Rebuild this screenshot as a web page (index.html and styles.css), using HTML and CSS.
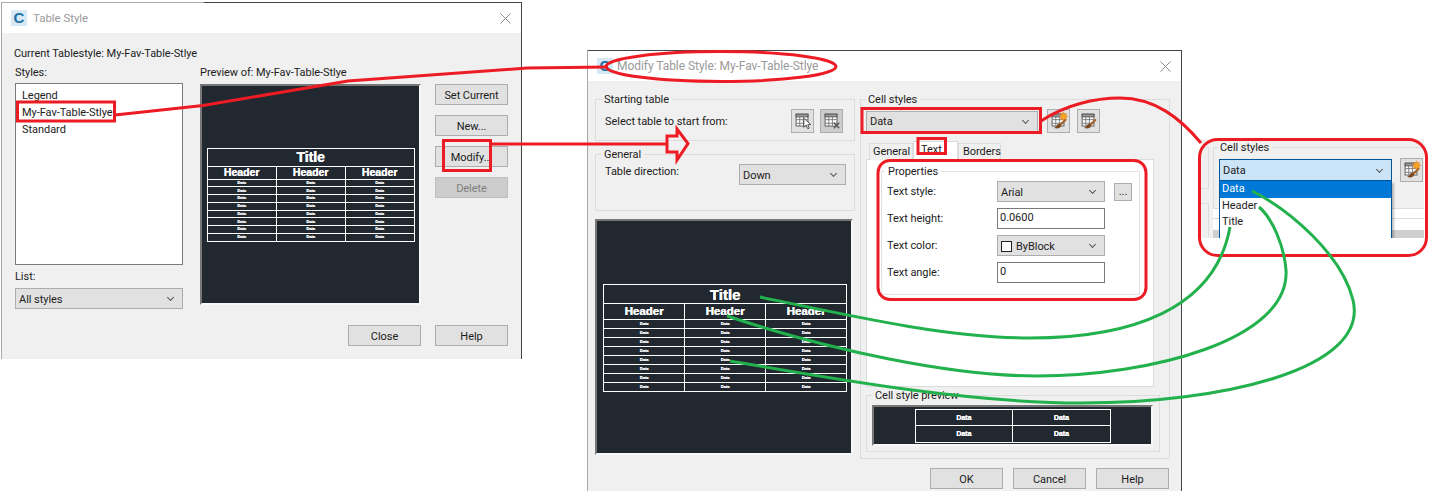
FILE: index.html
```html
<!DOCTYPE html>
<html lang="en">
<head>
    <meta charset="UTF-8">
    <title>Table Style dialogs</title>
    <link rel="stylesheet" href="styles.css">
</head>
<body>
    <!-- shared toolbar icons -->
    <svg class="icon-defs" aria-hidden="true">
        <symbol id="grid" viewBox="0 0 23 24">
            <rect x="4.500" y="4.500" width="13" height="13" fill="#fff" stroke="#555"/>
            <rect x="4.500" y="4.500" width="13" height="3" fill="#9a9a9a" stroke="#555"/>
            <path d="M4.500 10.500h13M4.500 14.500h13M8.500 7.500v10M12.500 7.500v10" stroke="#777" fill="none"/>
        </symbol>
        <symbol id="brush" viewBox="0 0 23 24">
            <path d="M19 9.500l1.500 1.500-6.500 6.500-2-2z" fill="#a0622d"/>
            <path d="M12 15c-2.500 0-2 3.500-5.500 4.500 3.500 1.500 7.500.5 8-2.500z" fill="#7b4a21"/>
        </symbol>
    </svg>

    <div id="canvas">
        <!-- first dialog -->
        <div class="win win-a">
            <div class="top-line top-line-a"></div>
            <div class="title-bar">
                <span class="app-icon">C</span>
                <span class="win-title">Table Style</span>
                <svg class="close-x" viewBox="0 0 11 11"><path d="M.5.500l10 10M10.500.500l-10 10" stroke="#888" fill="none"/></svg>
            </div>
            <div class="win-body body-a">
                <div class="current-line">Current Tablestyle: My-Fav-Table-Stlye</div>
                <div class="main-a">
                    <div class="col-styles">
                        <div class="field-label">Styles:</div>
                        <div class="style-list">
                            <div>Legend</div>
                            <div>My-Fav-Table-Stlye</div>
                            <div>Standard</div>
                        </div>
                        <div class="field-label list-label">List:</div>
                        <div class="combo"><span>All styles</span><i class="chev"></i></div>
                    </div>
                    <div class="col-preview">
                        <div class="field-label">Preview of: My-Fav-Table-Stlye</div>
                        <div class="dark-box box-a">
                            <table class="cad-table table-a">
                                <tr class="r-title"><td colspan="3">Title</td></tr>
                                <tr class="r-head"><td>Header</td><td>Header</td><td>Header</td></tr>
                                <tr class="r-data"><td>Data</td><td>Data</td><td>Data</td></tr>
                                <tr class="r-data"><td>Data</td><td>Data</td><td>Data</td></tr>
                                <tr class="r-data"><td>Data</td><td>Data</td><td>Data</td></tr>
                                <tr class="r-data"><td>Data</td><td>Data</td><td>Data</td></tr>
                                <tr class="r-data"><td>Data</td><td>Data</td><td>Data</td></tr>
                                <tr class="r-data"><td>Data</td><td>Data</td><td>Data</td></tr>
                                <tr class="r-data"><td>Data</td><td>Data</td><td>Data</td></tr>
                                <tr class="r-data"><td>Data</td><td>Data</td><td>Data</td></tr>
                            </table>
                        </div>
                    </div>
                    <div class="col-buttons">
                        <button class="btn">Set Current</button>
                        <button class="btn">New...</button>
                        <button class="btn">Modify...</button>
                        <button class="btn btn-off">Delete</button>
                    </div>
                </div>
                <div class="footer footer-a">
                    <button class="btn">Close</button>
                    <button class="btn">Help</button>
                </div>
            </div>
        </div>

        <!-- second dialog -->
        <div class="win win-b">
            <div class="top-line"></div>
            <div class="title-bar bar-b">
                <span class="app-icon">C</span>
                <span class="win-title">Modify Table Style: My-Fav-Table-Stlye</span>
                <svg class="close-x" viewBox="0 0 11 11"><path d="M.5.500l10 10M10.500.500l-10 10" stroke="#888" fill="none"/></svg>
            </div>
            <div class="win-body body-b">
                <div class="main-b">
                    <div class="left-b">
                        <div class="group group-start">
                            <div class="group-title">Starting table</div>
                            <div class="start-row">
                                <span>Select table to start from:</span>
                                <span class="tool-btns">
                                    <span class="tool">
                                        <svg viewBox="0 0 23 24"><use href="#grid"/><path d="M13 9l0 10 2.500-2.500 1.800 4 1.600-.7-1.700-3.800 3.300-.2z" fill="#fff" stroke="#222" stroke-width=".8"/></svg>
                                    </span>
                                    <span class="tool tool-off">
                                        <svg viewBox="0 0 23 24"><use href="#grid"/><path d="M14 14l6 6M20 14l-6 6" stroke="#555" stroke-width="1.500" fill="none"/></svg>
                                    </span>
                                </span>
                            </div>
                        </div>
                        <div class="group group-general">
                            <div class="group-title">General</div>
                            <div class="general-row">
                                <span>Table direction:</span>
                                <div class="combo combo-dir"><span>Down</span><i class="chev"></i></div>
                            </div>
                        </div>
                        <div class="dark-box box-b">
                            <table class="cad-table table-b">
                                <tr class="r-title"><td colspan="3">Title</td></tr>
                                <tr class="r-head"><td>Header</td><td>Header</td><td>Header</td></tr>
                                <tr class="r-data"><td>Data</td><td>Data</td><td>Data</td></tr>
                                <tr class="r-data"><td>Data</td><td>Data</td><td>Data</td></tr>
                                <tr class="r-data"><td>Data</td><td>Data</td><td>Data</td></tr>
                                <tr class="r-data"><td>Data</td><td>Data</td><td>Data</td></tr>
                                <tr class="r-data"><td>Data</td><td>Data</td><td>Data</td></tr>
                                <tr class="r-data"><td>Data</td><td>Data</td><td>Data</td></tr>
                                <tr class="r-data"><td>Data</td><td>Data</td><td>Data</td></tr>
                                <tr class="r-data"><td>Data</td><td>Data</td><td>Data</td></tr>
                            </table>
                        </div>
                    </div>
                    <div class="group group-cell">
                        <div class="group-title">Cell styles</div>
                        <div class="cell-row">
                            <div class="combo combo-cell"><span>Data</span><i class="chev"></i></div>
                            <span class="tool">
                                <svg viewBox="0 0 23 24"><use href="#grid"/><use href="#brush"/><path d="M17 2l1 2.500 2.500-1-1 2.500 2.500 1-2.500 1 1 2.500-2.500-1-1 2.500-1-2.500-2.500 1 1-2.500-2.500-1 2.500-1-1-2.500 2.500 1z" fill="#f5a623" stroke="#e2711d" stroke-width=".5"/></svg>
                            </span>
                            <span class="tool">
                                <svg viewBox="0 0 23 24"><use href="#grid"/><use href="#brush"/></svg>
                            </span>
                        </div>
                        <div class="tabs">
                            <span class="tab tab-general">General</span>
                            <span class="tab tab-on">Text</span>
                            <span class="tab tab-borders">Borders</span>
                        </div>
                        <div class="tab-panel">
                            <div class="group group-props">
                                <div class="group-title">Properties</div>
                                <div class="props-grid">
                                    <span>Text style:</span>
                                    <div class="combo"><span>Arial</span><i class="chev"></i></div>
                                    <button class="btn btn-dots">...</button>
                                    <span>Text height:</span>
                                    <div class="text-box">0.0600</div>
                                    <span></span>
                                    <span>Text color:</span>
                                    <div class="combo"><span class="swatch"></span><span>ByBlock</span><i class="chev"></i></div>
                                    <span></span>
                                    <span>Text angle:</span>
                                    <div class="text-box">0</div>
                                    <span></span>
                                </div>
                            </div>
                        </div>
                        <div class="group group-cellprev">
                            <div class="group-title">Cell style preview</div>
                            <div class="dark-box box-c">
                                <table class="cad-table table-c">
                                    <tr class="r-data"><td>Data</td><td>Data</td></tr>
                                    <tr class="r-data"><td>Data</td><td>Data</td></tr>
                                </table>
                            </div>
                        </div>
                    </div>
                </div>
                <div class="footer footer-b">
                    <button class="btn">OK</button>
                    <button class="btn">Cancel</button>
                    <button class="btn">Help</button>
                </div>
            </div>
        </div>

        <!-- cropped piece of the dialog with the list dropped down -->
        <div class="crop">
            <div class="stubs">
                <div class="stub-one"></div>
                <div class="stub-two"></div>
            </div>
            <div class="group group-crop">
                <div class="group-title">Cell styles</div>
                <div class="crop-row">
                    <div class="combo combo-open"><span>Data</span><i class="chev"></i></div>
                    <span class="tool">
                        <svg viewBox="0 0 23 24"><use href="#grid"/><use href="#brush"/><path d="M17 2l1 2.500 2.500-1-1 2.500 2.500 1-2.500 1 1 2.500-2.500-1-1 2.500-1-2.500-2.500 1 1-2.500-2.500-1 2.500-1-1-2.500 2.500 1z" fill="#f5a623" stroke="#e2711d" stroke-width=".5"/></svg>
                    </span>
                    <div class="drop-list">
                        <div class="drop-on">Data</div>
                        <div>Header</div>
                        <div>Title</div>
                    </div>
                </div>
                <div class="crop-lines"></div>
            </div>
        </div>

        <!-- hand drawn annotations on top of everything -->
        <svg class="marks" viewBox="0 0 1436 494">
            <g class="mark-red">
                <rect x="17.500" y="102" width="97" height="19"/>
                <rect x="443.500" y="140.500" width="47" height="30"/>
                <rect x="862" y="108.500" width="178.500" height="24"/>
                <rect x="918" y="138.500" width="27.500" height="15"/>
                <rect x="878" y="160.500" width="268" height="139" rx="12"/>
                <rect x="1199.500" y="139.500" width="227" height="116" rx="18"/>
                <ellipse cx="721" cy="66.500" rx="115" ry="15"/>
                <polygon points="667,136 677,136 677,129 688,143.500 677,160 677,152 667,152"/>
                <path d="M115 115L203 105.500L348 81L527 68L608 67"/>
                <path d="M491 144H667"/>
                <path d="M1041 121C1065 105 1095 98 1120 98C1155 98 1180 118 1201 143"/>
            </g>
            <g class="mark-green">
                <path d="M760 297C860 318 950 338 1030 338C1130 338 1215 310 1230 227"/>
                <path d="M727 316C830 350 950 376 1037 376C1150 376 1290 340 1286 270C1284 245 1272 218 1259 207"/>
                <path d="M730 361C840 380 970 403 1082 403C1220 403 1370 370 1353 300C1342 255 1290 210 1252 191"/>
            </g>
        </svg>
    </div>
</body>
</html>
```
FILE: styles.css
```css
* {
    box-sizing: border-box;
}

body {
    margin: 0;
    background-color: #fff;
    font-family: "Roboto", "Liberation Sans", sans-serif;
    font-size: 11px;
    letter-spacing: -0.05px;
    line-height: 15px;
    color: #1c1c1c;
    overflow: hidden;
}

.icon-defs {
    display: none;
}

#canvas {
    position: relative;
    width: 1436px;
    height: 494px;
}

/* windows */
.win {
    position: absolute;
    display: flex;
    flex-direction: column;
    border-left: 1px solid #a8a8a8;
    border-right: 1px solid #444;
    background-color: #f0f0f0;
}

.win-a {
    left: 1px;
    top: 2px;
    width: 521px;
    height: 357px;
}

.win-b {
    left: 587px;
    top: 50px;
    width: 595px;
    height: 441px;
}

.top-line {
    height: 1px;
    background-color: #444;
}

.top-line-a {
    background: linear-gradient(90deg, #aaa 39%, #444 39%);
}

.title-bar {
    display: flex;
    align-items: center;
    height: 30px;
    padding: 0 10px 0 9px;
    background-color: #fff;
    flex-shrink: 0;
}

.app-icon {
    width: 16px;
    height: 16px;
    margin-right: 6px;
    background-color: #d6e9f5;
    color: #1f6fa8;
    font: bold 15px/16px "Liberation Sans", sans-serif;
    text-align: center;
}

.bar-b .app-icon {
    margin-right: 4px;
}

.win-title {
    flex: 1;
    color: #9a9a9a;
    font-size: 11.500px;
}

.bar-b .win-title {
    font-size: 12px;
}

.close-x {
    width: 11px;
    height: 11px;
}

.win-body {
    flex: 1;
    display: flex;
    flex-direction: column;
}

.field-label {
    height: 16px;
    line-height: 16px;
}

/* first dialog */
.body-a {
    padding: 13px 13px 0 12px;
}

.current-line {
    height: 16px;
    line-height: 16px;
}

.main-a {
    display: flex;
    margin-top: 3px;
}

.col-styles {
    width: 168px;
    margin-left: 1px;
}

.style-list {
    height: 182px;
    margin-top: 2px;
    padding: 3px 0 0 6px;
    background-color: #fff;
    border: 1px solid #7a7a7a;
}

.style-list div {
    height: 17px;
    line-height: 17px;
}

.list-label {
    margin: 4px 0 3px;
}

.col-preview {
    width: 221px;
    margin-left: 17px;
}

.col-buttons {
    display: flex;
    flex-direction: column;
    gap: 10px;
    margin: 19px 0 0 14px;
}

.footer {
    display: flex;
    justify-content: flex-end;
}

.footer-a {
    margin-top: 16px;
    gap: 14px;
}

.footer-b {
    margin-top: 9px;
    gap: 10px;
    padding-right: 12px;
}

/* controls */
.btn {
    width: 73px;
    height: 21px;
    padding: 1px 0 0;
    background-color: #e1e1e1;
    border: 1px solid #adadad;
    color: #1c1c1c;
    font: inherit;
    letter-spacing: inherit;
    text-align: center;
}

.btn-off {
    background-color: #ccc;
    border-color: #bfbfbf;
    color: #808080;
}

.btn-dots {
    width: 18px;
    height: 18px;
    align-self: center;
    line-height: 12px;
}

.combo {
    display: flex;
    align-items: center;
    height: 21px;
    padding: 1px 7px 0 3px;
    background-color: #e1e1e1;
    border: 1px solid #adadad;
}

.combo > span:first-child {
    flex: none;
}

.chev {
    width: 5px;
    height: 5px;
    margin: -3px 2px 0 auto;
    border-right: 1px solid #555;
    border-bottom: 1px solid #555;
    transform: rotate(45deg);
}

.text-box {
    height: 21px;
    padding-left: 2px;
    line-height: 18px;
    background-color: #fff;
    border: 1px solid #7a7a7a;
}

.swatch {
    width: 11px;
    height: 11px;
    margin: 0 4px 0 0;
    background-color: #fff;
    border: 1px solid #222;
}

.tool {
    display: block;
    width: 23px;
    height: 24px;
    background-color: #e1e1e1;
    border: 1px solid #adadad;
}

.tool svg {
    display: block;
    width: 21px;
    height: 22px;
}

.tool-off {
    background-color: #ccc;
}

/* group boxes with the caption sitting on the border */
.group {
    border: 1px solid #dcdcdc;
}

.group-title {
    display: table;
    margin: -8px 0 0 -2px;
    padding: 0 3px;
    background-color: #f0f0f0;
}

/* second dialog */
.main-b {
    display: flex;
    gap: 5px;
    padding: 18px 0 0 7px;
}

.left-b {
    width: 260px;
}

.group-start {
    height: 42px;
    padding: 0 11px 0 9px;
}

.group-start .group-title,
.group-general .group-title {
    margin-left: -4px;
}

.start-row {
    display: flex;
    align-items: center;
    justify-content: space-between;
    margin-top: 2px;
}

.tool-btns {
    display: flex;
    gap: 6px;
}

.group-general {
    height: 57px;
    margin-top: 13px;
    padding: 0 8px 0 9px;
}

.general-row {
    display: flex;
    justify-content: space-between;
    margin-top: 2px;
}

.combo-dir {
    width: 107px;
}

.group-cell {
    width: 310px;
    height: 360px;
    padding: 0 9px 0 5px;
}

.group-cell > .group-title {
    margin-left: -1px;
}

.cell-row {
    display: flex;
    align-items: center;
    gap: 7px;
    margin-top: 2px;
}

.combo-cell {
    width: 172px;
    margin-right: 2px;
}

.tabs {
    display: flex;
    height: 16px;
    margin: 10px 0 0 3px;
}

.tab {
    height: 17px;
    line-height: 15px;
    background-color: #f0f0f0;
    border: 1px solid #dcdcdc;
    border-bottom: none;
}

.tab-general {
    width: 44px;
    padding-left: 3px;
}

.tab-borders {
    width: 43px;
    padding-left: 4px;
}

.tab-on {
    position: relative;
    width: 45px;
    height: 19px;
    margin-top: -2px;
    padding-left: 7px;
    background-color: #fff;
    z-index: 1;
}

.tab-panel {
    width: 288px;
    height: 228px;
    padding: 11px 0 0 14px;
    background-color: #fff;
    border: 1px solid #dcdcdc;
}

.group-props {
    width: 259px;
    height: 124px;
    padding-left: 5px;
    border-color: #e2e2e2;
}

.group-props .group-title {
    background-color: #fff;
}

.props-grid {
    display: grid;
    grid-template-columns: 101px 108px 18px;
    grid-auto-rows: 21px;
    column-gap: 9px;
    row-gap: 6px;
    align-items: center;
    margin-top: 2px;
}

.group-cellprev {
    width: 294px;
    height: 57px;
    margin-top: 8px;
    padding-left: 5px;
}

.group-cellprev .group-title {
    margin-left: 0;
}

/* dark drawing previews */
.dark-box {
    display: flex;
    align-items: center;
    justify-content: center;
    background-color: #212830;
    border: 2px solid;
    border-color: #777 #f8f8f8 #f8f8f8 #777;
}

.box-a {
    height: 221px;
    margin-top: 3px;
}

.box-b {
    width: 258px;
    height: 236px;
    margin-top: 8px;
}

.box-c {
    width: 281px;
    height: 41px;
    margin-top: 2px;
}

.cad-table {
    border-collapse: collapse;
    table-layout: fixed;
    color: #fff;
    font-family: "Liberation Sans", sans-serif;
    font-weight: bold;
    letter-spacing: 0;
    text-align: center;
    text-shadow: 0.4px 0 0 #fff;
}

.cad-table td {
    padding: 0;
    border: 1px solid #fff;
    line-height: 1;
}

.table-a {
    width: 208px;
    height: 94px;
}

.table-b {
    width: 244px;
    height: 108px;
    margin: 2px 0 0 2px;
}

.table-c {
    width: 196px;
    height: 34px;
}

.r-title td {
    font-size: 14px;
    height: 18px;
}

.table-b .r-title td {
    height: 19px;
    font-size: 15px;
}

.r-head td {
    font-size: 10.500px;
    height: 13px;
}

.table-b .r-head td {
    height: 16px;
    font-size: 11.500px;
}

.r-data td {
    font-size: 4px;
    overflow: hidden;
}

.table-c .r-data td {
    font-size: 7px;
}

/* cropped combo picture */
.crop {
    position: absolute;
    left: 1201px;
    top: 139px;
    display: flex;
    width: 223px;
    height: 99px;
    background-color: #f0f0f0;
    overflow: hidden;
}

.stubs {
    width: 8px;
    flex-shrink: 0;
}

.stub-one {
    height: 42px;
    margin-top: 8px;
    border: 1px solid #dcdcdc;
    border-left: none;
}

.stub-two {
    height: 60px;
    margin-top: 14px;
    border-top: 1px solid #dcdcdc;
    border-right: 1px solid #dcdcdc;
}

.group-crop {
    flex: 1;
    height: 120px;
    margin: 8px 0 0 4px;
    padding-left: 5px;
    border-right: none;
}

.crop-row {
    position: relative;
    display: flex;
    gap: 8px;
    margin-top: 4px;
}

.combo-open {
    width: 173px;
    height: 22px;
    background-color: #cce4f7;
    border-color: #005499;
}

.crop-row .tool {
    margin-top: -1px;
}

.drop-list {
    position: absolute;
    left: 0;
    top: 22px;
    width: 173px;
    height: 60px;
    background-color: #fff;
    border: 1px solid #005499;
    border-top: none;
    box-shadow: 2px 2px 2px rgba(0, 0, 0, 0.25);
}

.drop-list div {
    height: 16px;
    padding-left: 2px;
    line-height: 16px;
}

.drop-list .drop-on {
    height: 17px;
    background-color: #0078d7;
    color: #fff;
}

.crop-lines {
    height: 40px;
    margin: 26px 0 0 -6px;
    border-top: 1px solid #dcdcdc;
    background: linear-gradient(#fff 9px, #dcdcdc 9px, #dcdcdc 10px, #fff 10px, #fff 21px, #cfcfcf 21px);
}

/* annotations */
.marks {
    position: absolute;
    left: 0;
    top: 0;
    width: 1436px;
    height: 494px;
    z-index: 5;
    pointer-events: none;
}

.mark-red * {
    fill: none;
    stroke: #ed1c24;
    stroke-width: 3;
}

.mark-green path {
    fill: none;
    stroke: #22b14c;
    stroke-width: 3;
}
```
